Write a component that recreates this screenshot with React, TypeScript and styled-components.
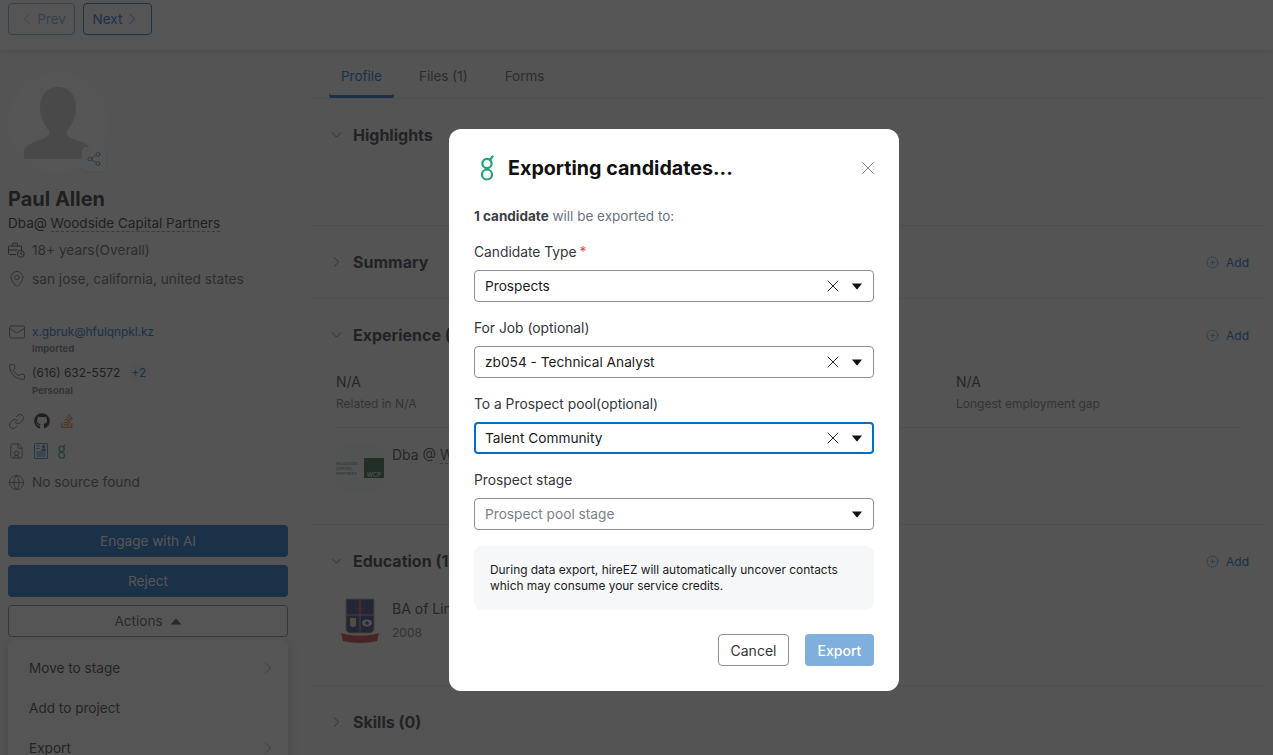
import React from 'react';
import styled, { createGlobalStyle } from 'styled-components';
import {
  ChevronDown,
  ChevronLeft,
  ChevronRight,
  CirclePlus,
  FileUser,
  Globe,
  Link as LinkIcon,
  Mail,
  MapPin,
  Phone,
  Share2,
  X,
} from 'lucide-react';
import { FaGithub, FaStackOverflow } from 'react-icons/fa';

const BLUE = '#0064c8';
const TEXT = '#16181d';
const MUTED = '#6b7280';

const GlobalStyle = createGlobalStyle`
  html, body {
    margin: 0;
    padding: 0;
    height: 100%;
    overflow: hidden;
    background: #f8f8f9;
  }
  body {
    font-family: Inter, "Liberation Sans", sans-serif;
    color: ${TEXT};
  }
  * {
    box-sizing: border-box;
  }
`;

const HireLogo = ({ size = 26, color = '#1fa37b' }: { size?: number; color?: string }) => (
  <svg width={(size * 16) / 26} height={size} viewBox="0 0 16 26" fill="none" stroke={color} strokeWidth="2.2">
    <circle cx="8" cy="8.5" r="4.6" />
    <circle cx="8" cy="19.500" r="5" />
    <path d="M8 13.200v1.200M11 5l2.600-3.600" strokeLinecap="round" />
  </svg>
);

const Caret = ({ up }: { up?: boolean }) => (
  <svg width="12" height="7" viewBox="0 0 12 7">
    <path d={up ? 'M6 0.5 11.5 6.5H0.5Z' : 'M1 0.5H11L6.6 6a.8.8 0 0 1-1.200 0Z'} fill="currentColor" />
  </svg>
);

const BriefClock = () => (
  <svg width="17" height="16" viewBox="0 0 17 16" fill="none" stroke="currentColor" strokeWidth="1">
    <path d="M8 12.500H1.500a1 1 0 0 1-1-1V5a1 1 0 0 1 1-1h11a1 1 0 0 1 1 1v3" />
    <path d="M4.500 4V2.200a1 1 0 0 1 1-1h3a1 1 0 0 1 1 1V4M.5 8h9" />
    <circle cx="12.800" cy="11.800" r="3.400" />
    <path d="M12.800 10.200v1.800h1.400" />
  </svg>
);

const ResumeIcon = () => (
  <svg width="14" height="16" viewBox="0 0 14 16" fill="none" stroke="#2f7fd0" strokeWidth="1">
    <rect x="0.5" y="0.5" width="13" height="15" rx="0.5" />
    <circle cx="9.600" cy="3.600" r="1.400" fill="#2f7fd0" />
    <path d="M7.400 7.200c.3-1.800 4-1.800 4.400 0Z" fill="#2f7fd0" />
    <path d="M2.500 3h3M2.500 5.500h3M2.500 9h9M2.500 11h9M2.500 13h9" />
  </svg>
);

const Crest = () => (
  <svg width="38" height="46" viewBox="0 0 38 46">
    <path d="M5 1h28v30c0 2-2 4-4 4H9c-2 0-4-2-4-4Z" fill="#2b2f7e" stroke="#b9a36a" />
    <path d="M5 17h28M19 1v34" stroke="#d9c88e" strokeWidth="0.8" />
    <path d="M19 6c2 2 3 5 0 9-3-4-2-7 0-9Z" fill="#d3362d" />
    <path d="M9 20h6v7c0 1.500-1.800 2-3 2s-3-.5-3-2Z" fill="#e8dcb0" />
    <ellipse cx="26" cy="25" rx="5" ry="3.400" fill="#e8e8e8" />
    <circle cx="26" cy="25" r="1.800" fill="#2b2f7e" />
    <path d="M0 35c6 2 12 2.500 19 2.500S32 37 38 35l-2 8c-5 1-11 2-17 2s-12-1-17-2Z" fill="#c5332a" />
  </svg>
);

const CompanyLogo = () => (
  <LogoTile>
    <LogoWords>
      WOODSIDE
      <br />
      CAPITAL
      <br />
      PARTNERS
    </LogoWords>
    <LogoMark>WCP</LogoMark>
  </LogoTile>
);

const Section = ({
  title,
  open,
  add,
  height,
  children,
}: {
  title: string;
  open?: boolean;
  add?: boolean;
  height: number;
  children?: React.ReactNode;
}) => (
  <SectionBox $height={height}>
    <SectionHead>
      <Chevron>{open ? <ChevronDown size={20} strokeWidth={1} /> : <ChevronRight size={20} strokeWidth={1} />}</Chevron>
      <SectionTitle>{title}</SectionTitle>
      {add && (
        <AddLink>
          <CirclePlus size={13} strokeWidth={1} />
          Add
        </AddLink>
      )}
    </SectionHead>
    {children}
  </SectionBox>
);

const Select = ({
  value,
  placeholder,
  focused,
}: {
  value?: string;
  placeholder?: string;
  focused?: boolean;
}) => (
  <SelectBox $focused={focused}>
    <SelectValue $placeholder={!value}>{value || placeholder}</SelectValue>
    {value && <X size={20} strokeWidth={1.1} />}
    <SelectCaret>
      <Caret />
    </SelectCaret>
  </SelectBox>
);

const App = () => (
  <>
    <GlobalStyle />
    <Page>
      <TopBar>
        <PageButton $disabled>
          <ChevronLeft size={20} strokeWidth={0.9} />
          Prev
        </PageButton>
        <PageButton>
          Next
          <ChevronRight size={20} strokeWidth={0.9} />
        </PageButton>
      </TopBar>

      <Body>
        <Sidebar>
          <Avatar>
            <svg width="72" height="72" viewBox="0 0 72 72">
              <path
                d="M36 0c11 0 18 8 18 20 0 11-5 19-9 24-1 3 1 5 4 7 6 3 21 5 21 15v6H2v-6c0-10 15-12 21-15 3-2 5-4 4-7-4-5-9-13-9-24C18 8 25 0 36 0Z"
                fill="#c9ccd0"
              />
            </svg>
            <ShareBadge>
              <Share2 size={16} strokeWidth={1} />
            </ShareBadge>
          </Avatar>

          <Name>Paul Allen</Name>
          <Headline>
            Dba@ <Dashed>Woodside Capital Partners</Dashed>
          </Headline>

          <InfoRow $top={7}>
            <IconSlot>
              <BriefClock />
            </IconSlot>
            <InfoText>18+ years(Overall)</InfoText>
          </InfoRow>
          <InfoRow $top={9}>
            <IconSlot>
              <MapPin size={18} strokeWidth={1} />
            </IconSlot>
            <InfoText>san jose, california, united states</InfoText>
          </InfoRow>

          <ContactRow $top={34}>
            <IconSlot>
              <Mail size={18} strokeWidth={1} />
            </IconSlot>
            <div>
              <EmailText>x.gbruk@hfulqnpkl.kz</EmailText>
              <ContactLabel>Imported</ContactLabel>
            </div>
          </ContactRow>
          <ContactRow $top={8}>
            <IconSlot>
              <Phone size={18} strokeWidth={1} />
            </IconSlot>
            <div>
              <PhoneLine>
                (616) 632-5572 <MoreBadge>+2</MoreBadge>
              </PhoneLine>
              <ContactLabel>Personal</ContactLabel>
            </div>
          </ContactRow>

          <IconRow $top={16}>
            <IconSlot>
              <LinkIcon size={17} strokeWidth={1} />
            </IconSlot>
            <FaGithub size={16} color="#16181d" />
            <FaStackOverflow size={16} color="#e8792b" />
          </IconRow>
          <IconRow $top={14}>
            <IconSlot>
              <FileUser size={18} strokeWidth={1} />
            </IconSlot>
            <ResumeIcon />
            <HireLogo size={15} />
          </IconRow>
          <InfoRow $top={13}>
            <IconSlot>
              <Globe size={17} strokeWidth={1} />
            </IconSlot>
            <InfoText>No source found</InfoText>
          </InfoRow>

          <PrimaryButton $top={33}>Engage with AI</PrimaryButton>
          <PrimaryButton $top={8}>Reject</PrimaryButton>
          <ActionsButton>
            Actions
            <Caret up />
          </ActionsButton>
          <ActionsMenu>
            <MenuItem>
              Move to stage
              <ChevronRight size={20} strokeWidth={0.9} />
            </MenuItem>
            <MenuItem>Add to project</MenuItem>
            <MenuItem>
              Export
              <ChevronRight size={20} strokeWidth={0.9} />
            </MenuItem>
          </ActionsMenu>
        </Sidebar>

        <Main>
          <Tabs>
            <Tab $active>Profile</Tab>
            <Tab>Files (1)</Tab>
            <Tab>Forms</Tab>
          </Tabs>

          <Section title="Highlights" open height={127} />
          <Section title="Summary" add height={73} />
          <Section title="Experience (1)" open add height={226}>
            <Stats>
              <Stat>
                <StatValue>N/A</StatValue>
                <StatLabel>Related in N/A</StatLabel>
              </Stat>
              <Stat>
                <StatValue>N/A</StatValue>
                <StatLabel>Longest employment gap</StatLabel>
              </Stat>
            </Stats>
            <EntryRow $top={16}>
              <CompanyLogo />
              <EntryTitle>
                Dba @ <Dashed>Woodside Capital Partners</Dashed>
              </EntryTitle>
            </EntryRow>
          </Section>
          <Section title="Education (1)" open add height={161}>
            <EntryRow $top={26}>
              <CrestSlot>
                <Crest />
              </CrestSlot>
              <div>
                <EntryTitle>BA of Linguistics</EntryTitle>
                <EntryYear>2008</EntryYear>
              </div>
            </EntryRow>
          </Section>
          <Section title="Skills (0)" height={69} />
        </Main>
      </Body>

      <Overlay>
        <Modal>
          <ModalHead>
            <HireLogo />
            <ModalTitle>Exporting candidates...</ModalTitle>
            <CloseButton>
              <X size={22} strokeWidth={0.8} />
            </CloseButton>
          </ModalHead>

          <Lead>
            <strong>1 candidate</strong> will be exported to:
          </Lead>

          <Field>
            <FieldLabel>
              Candidate Type<Required>*</Required>
            </FieldLabel>
            <Select value="Prospects" />
          </Field>
          <Field>
            <FieldLabel>For Job (optional)</FieldLabel>
            <Select value="zb054 - Technical Analyst" />
          </Field>
          <Field>
            <FieldLabel>To a Prospect pool(optional)</FieldLabel>
            <Select value="Talent Community" focused />
          </Field>
          <Field>
            <FieldLabel>Prospect stage</FieldLabel>
            <Select placeholder="Prospect pool stage" />
          </Field>

          <Notice>
            During data export, hireEZ will automatically uncover contacts
            <br />
            which may consume your service credits.
          </Notice>

          <ModalFooter>
            <CancelButton>Cancel</CancelButton>
            <ExportButton>Export</ExportButton>
          </ModalFooter>
        </Modal>
      </Overlay>
    </Page>
  </>
);

const Page = styled.div`
  height: 755px;
  overflow: hidden;
  display: flex;
  flex-direction: column;
  font-size: 14px;
`;

const TopBar = styled.div`
  height: 50px;
  flex: none;
  display: flex;
  gap: 8px;
  padding: 3px 8px 0;
  background: #fff;
  box-shadow: 0 1px 4px rgba(0, 0, 0, 0.15);
`;

const PageButton = styled.button<{ $disabled?: boolean }>`
  width: ${(p) => (p.$disabled ? '67px' : '69px')};
  height: 32px;
  display: flex;
  align-items: center;
  justify-content: center;
  gap: 0;
  padding: 0;
  border: 1px solid ${BLUE};
  border-radius: 4px;
  background: #fff;
  color: ${BLUE};
  font: inherit;
  font-size: 13.5px;
  opacity: ${(p) => (p.$disabled ? 0.55 : 1)};
`;

const Body = styled.div`
  flex: 1;
  display: flex;
  min-height: 0;
`;

const Sidebar = styled.aside`
  width: 304px;
  flex: none;
  padding: 23px 16px 0 8px;
`;

const Avatar = styled.div`
  position: relative;
  width: 100px;
  height: 100px;
  border-radius: 50%;
  background: #fff;
  display: flex;
  justify-content: center;
  padding-top: 14px;
`;

const ShareBadge = styled.span`
  position: absolute;
  left: 74px;
  top: 74px;
  width: 24px;
  height: 24px;
  border-radius: 4px;
  background: #fff;
  box-shadow: 0 1px 3px rgba(0, 0, 0, 0.08);
  color: ${BLUE};
  display: flex;
  align-items: center;
  justify-content: center;
`;

const Name = styled.div`
  margin-top: 13px;
  font-size: 20px;
  line-height: 26px;
  font-weight: 700;
`;

const Headline = styled.div`
  margin-top: 1px;
  font-size: 13.5px;
  line-height: 20px;
`;

const Dashed = styled.span`
  border-bottom: 1px dashed #8a8f98;
`;

const InfoRow = styled.div<{ $top: number }>`
  margin-top: ${(p) => p.$top}px;
  display: flex;
  align-items: center;
  height: 20px;
`;

const IconSlot = styled.span`
  width: 24px;
  flex: none;
  display: flex;
  color: #3c4048;
`;

const InfoText = styled.span`
  font-size: 13.7px;
  color: #4b5563;
`;

const ContactRow = styled.div<{ $top: number }>`
  margin-top: ${(p) => p.$top}px;
  display: flex;
  align-items: flex-start;
`;

const EmailText = styled.div`
  font-size: 11.8px;
  line-height: 18px;
  color: ${BLUE};
`;

const PhoneLine = styled.div`
  font-size: 12px;
  line-height: 20px;
  display: flex;
  align-items: center;
  gap: 9px;
`;

const MoreBadge = styled.span`
  color: ${BLUE};
  background: #f1f3f5;
  border-radius: 50%;
  padding: 0 2px;
`;

const ContactLabel = styled.div`
  margin-top: 1px;
  font-size: 9.5px;
  line-height: 13px;
  font-weight: 700;
  color: ${MUTED};
`;

const IconRow = styled.div<{ $top: number }>`
  margin-top: ${(p) => p.$top}px;
  height: 16px;
  display: flex;
  align-items: center;
  gap: 9px;

  & > span {
    width: 17px;
  }
`;

const PrimaryButton = styled.button<{ $top: number }>`
  display: block;
  width: 100%;
  height: 32px;
  margin-top: ${(p) => p.$top}px;
  border: 0;
  border-radius: 4px;
  background: ${BLUE};
  color: #fff;
  font: inherit;
  font-size: 13.6px;
`;

const ActionsButton = styled.button`
  width: 100%;
  height: 32px;
  margin-top: 8px;
  display: flex;
  align-items: center;
  justify-content: center;
  gap: 7px;
  border: 1px solid #7b8088;
  border-radius: 4px;
  background: #fff;
  color: #3c4048;
  font: inherit;
  font-size: 13.6px;
`;

const ActionsMenu = styled.div`
  margin-top: 3px;
  padding: 8px 0;
  border-radius: 8px;
  background: #fff;
  box-shadow: 0 3px 12px rgba(0, 0, 0, 0.18);
`;

const MenuItem = styled.div`
  height: 40px;
  display: flex;
  align-items: center;
  justify-content: space-between;
  padding: 0 10px 0 21px;
  font-size: 13.6px;
  color: #2a2d33;

  svg {
    color: #6b7280;
  }
`;

const Main = styled.main`
  flex: 1;
  min-width: 0;
  padding: 0 7px 0 8px;
`;

const Tabs = styled.div`
  height: 49px;
  display: flex;
  gap: 13px;
  padding-left: 17px;
  border-bottom: 1px solid #dfe2e6;
`;

const Tab = styled.div<{ $active?: boolean }>`
  height: 48px;
  padding: 4px 12px 0;
  display: flex;
  align-items: center;
  font-size: 13.5px;
  color: ${(p) => (p.$active ? BLUE : '#4b5563')};
  box-shadow: ${(p) => (p.$active ? `inset 0 -3px 0 ${BLUE}` : 'none')};
  border-radius: 2px;
`;

const SectionBox = styled.section<{ $height: number }>`
  height: ${(p) => p.$height}px;
  padding: 25px 17px 0 24px;
  border-bottom: 1px solid #dfe2e6;

  &:last-child {
    border-bottom: 0;
  }
`;

const SectionHead = styled.div`
  height: 22px;
  display: flex;
  align-items: center;
`;

const Chevron = styled.span`
  width: 17px;
  margin-left: -8px;
  margin-right: 2px;
  display: flex;
  color: #2a2d33;
`;

const SectionTitle = styled.h3`
  margin: 0 0 0 6px;
  flex: 1;
  font-size: 16px;
  line-height: 22px;
  font-weight: 700;
  color: #23262c;
`;

const AddLink = styled.span`
  display: flex;
  align-items: center;
  gap: 7px;
  font-size: 12px;
  color: ${BLUE};
`;

const Stats = styled.div`
  margin: 27px 8px 0 0;
  padding-bottom: 15px;
  display: grid;
  grid-template-columns: 620px 1fr;
  border-bottom: 1px solid #dfe2e6;
`;

const Stat = styled.div`
  display: flex;
  flex-direction: column;
  gap: 5px;
`;

const StatValue = styled.div`
  font-size: 14px;
  line-height: 18px;
  color: #33363c;
`;

const StatLabel = styled.div`
  font-size: 12px;
  line-height: 16px;
  color: ${MUTED};
`;

const EntryRow = styled.div<{ $top: number }>`
  margin-top: ${(p) => p.$top}px;
  display: flex;
  gap: 8px;
  align-items: flex-start;
`;

const LogoTile = styled.div`
  width: 48px;
  height: 48px;
  flex: none;
  border-radius: 8px;
  background: #f3f4f5;
  display: flex;
  align-items: center;
  justify-content: space-between;
  overflow: hidden;
`;

const LogoWords = styled.div`
  font-size: 4px;
  line-height: 5px;
  color: #555;
`;

const LogoMark = styled.div`
  width: 20px;
  height: 20px;
  background: #1f5c3a;
  color: #fff;
  font-size: 6px;
  display: flex;
  align-items: flex-end;
  justify-content: center;
`;

const EntryTitle = styled.div`
  font-size: 14px;
  line-height: 22px;
  color: #33363c;
`;

const EntryYear = styled.div`
  margin-top: 2px;
  font-size: 12px;
  line-height: 22px;
  color: ${MUTED};
`;

const CrestSlot = styled.div`
  width: 48px;
  display: flex;
  justify-content: center;
`;

const Overlay = styled.div`
  position: fixed;
  inset: 0;
  background: rgba(34, 34, 34, 0.77);
  display: flex;
  justify-content: center;
  align-items: flex-start;
  padding: 129px 0 0 75px;
`;

const Modal = styled.div`
  width: 450px;
  height: 562px;
  padding: 25px 25px 0;
  background: #fff;
  border-radius: 12px;
  color: ${TEXT};
`;

const ModalHead = styled.div`
  height: 28px;
  display: flex;
  align-items: center;
  gap: 13px;
  padding-left: 5px;
`;

const ModalTitle = styled.h2`
  margin: 0;
  flex: 1;
  font-size: 19.7px;
  line-height: 28px;
  font-weight: 700;
  color: #111;
`;

const CloseButton = styled.span`
  display: flex;
  color: #4b5563;
  margin-right: -5px;
`;

const Lead = styled.div`
  margin-top: 24px;
  font-size: 13.5px;
  line-height: 20px;
  color: #6b7280;

  strong {
    color: #3c4048;
    font-weight: 700;
  }
`;

const Field = styled.div`
  margin-top: 16px;
`;

const FieldLabel = styled.div`
  font-size: 13.8px;
  line-height: 20px;
  margin-bottom: 8px;
  color: #33363c;
`;

const Required = styled.span`
  color: #e5484d;
  margin-left: 3px;
`;

const SelectBox = styled.div<{ $focused?: boolean }>`
  height: 32px;
  display: flex;
  align-items: center;
  padding: 0 10px;
  border-radius: 4px;
  border: 1px solid #8d9096;
  ${(p) => p.$focused && `border: 2px solid #006fc4; padding: 0 9px;`}
  background: #fff;
  color: #111;
`;

const SelectValue = styled.span<{ $placeholder?: boolean }>`
  flex: 1;
  font-size: 13.7px;
  color: ${(p) => (p.$placeholder ? '#7b8088' : '#1a1c20')};
`;

const SelectCaret = styled.span`
  display: flex;
  margin-left: 8px;
  margin-right: 0;
`;

const Notice = styled.div`
  margin-top: 16px;
  height: 64px;
  padding: 16px;
  border-radius: 8px;
  background: #f6f7f9;
  font-size: 11.9px;
  line-height: 16px;
  color: #1a1c20;
`;

const ModalFooter = styled.div`
  margin-top: 24px;
  display: flex;
  justify-content: flex-end;
  gap: 16px;
`;

const CancelButton = styled.button`
  width: 71px;
  height: 32px;
  border: 1px solid #8d9096;
  border-radius: 4px;
  background: #fff;
  color: #33363c;
  font: inherit;
  font-size: 14px;
`;

const ExportButton = styled.button`
  width: 69px;
  height: 32px;
  border: 0;
  border-radius: 4px;
  background: #7fafdc;
  color: #fff;
  font: inherit;
  font-size: 14px;
  font-weight: 500;
`;

export default App;
